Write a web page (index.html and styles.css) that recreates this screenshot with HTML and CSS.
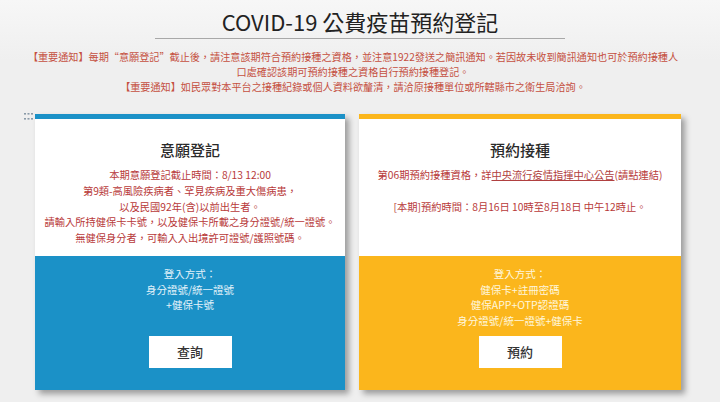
FILE: index.html
```html
<!DOCTYPE html>
<html lang="zh-Hant">
<head>
<meta charset="utf-8">
<title>COVID-19 公費疫苗預約登記</title>
<link rel="stylesheet" href="styles.css">
</head>
<body>
<div class="page">
  <h1 class="title">COVID-19 公費疫苗預約登記</h1>
  <div class="notice">
    <p>【重要通知】每期“意願登記”截止後，請注意該期符合預約接種之資格，並注意1922發送之簡訊通知。若因故未收到簡訊通知也可於預約接種人<br>口處確認該期可預約接種之資格自行預約接種登記。</p>
    <p>【重要通知】如民眾對本平台之接種紀錄或個人資料欲釐清，請洽原接種單位或所轄縣市之衛生局洽詢。</p>
  </div>
  <div class="cards">
    <svg class="grip" width="9" height="7" viewBox="0 0 9 7"><g fill="#8a9aa8"><rect x="0" y="0" width="2" height="1.6"/><rect x="3.5" y="0" width="2" height="1.6"/><rect x="7" y="0" width="2" height="1.6"/><rect x="0" y="5" width="2" height="1.6"/><rect x="3.5" y="5" width="2" height="1.6"/><rect x="7" y="5" width="2" height="1.6"/></g></svg>
    <section class="card card-blue">
      <div class="card-top">
        <h2 class="card-title">意願登記</h2>
        <p class="card-text">本期意願登記截止時間：8/13 12:00<br>第9類-高風險疾病者、罕見疾病及重大傷病患，<br>以及民國92年(含)以前出生者。<br>請輸入所持健保卡卡號，以及健保卡所載之身分證號/統一證號。<br>無健保身分者，可輸入入出境許可證號/護照號碼。</p>
      </div>
      <div class="card-bottom">
        <p class="login">登入方式：<br>身分證號/統一證號<br>+健保卡號</p>
        <a class="btn" href="#">查詢</a>
      </div>
    </section>
    <section class="card card-yellow">
      <div class="card-top">
        <h2 class="card-title">預約接種</h2>
        <p class="card-text">第06期預約接種資格，詳<a class="link" href="#">中央流行疫情指揮中心公告</a>(請點連結)<br><br>[本期]預約時間：8月16日 10時至8月18日 中午12時止。</p>
      </div>
      <div class="card-bottom">
        <p class="login">登入方式：<br>健保卡+註冊密碼<br>健保APP+OTP認證碼<br>身分證號/統一證號+健保卡</p>
        <a class="btn" href="#">預約</a>
      </div>
    </section>
  </div>
</div>
</body>
</html>
```
FILE: styles.css
```css
* { box-sizing: border-box; }
html, body {
  margin: 0;
  padding: 0;
  background: #efefef;
  font-family: "Noto Sans CJK TC", "Noto Sans", sans-serif;
}
.page {
  width: 720px;
  height: 402px;
  overflow: hidden;
  background: linear-gradient(#f7f7f7, #efefef 60px);
}
.title {
  width: 410px;
  margin: 0 auto;
  padding-top: 6px;
  height: 39px;
  border-bottom: 1px solid #a8a8a8;
  text-align: center;
  font-size: 22px;
  line-height: 30px;
  font-weight: 400;
  color: #222;
}
.notice {
  margin: 10px 0 0 0;
  padding-right: 14px;
  text-align: center;
  color: #c5503f;
  font-size: 10.15px;
  line-height: 15px;
}
.notice p { margin: 0; }
.cards {
  position: relative;
  display: flex;
  gap: 14px;
  margin-top: 20px;
  padding-left: 35px;
}
.grip {
  position: absolute;
  left: 24px;
  top: -1px;
}
.card {
  display: flex;
  flex-direction: column;
  box-shadow: 4px 4px 6px rgba(0, 0, 0, 0.35);
}
.card-blue { width: 310px; border-top: 5px solid #1b91c7; }
.card-yellow { width: 322px; border-top: 5px solid #fbb61c; }
.card-top {
  height: 137px;
  background: #fff;
  padding-top: 21px;
  text-align: center;
}
.card-title {
  margin: 0;
  font-size: 15px;
  line-height: 20px;
  font-weight: 500;
  color: #2a2a2a;
}
.card-text {
  margin: 7px 0 0 0;
  font-size: 10.25px;
  line-height: 15.8px;
  color: #b83a3a;
}
.link { color: #b04040; text-decoration: underline; }
.card-bottom {
  height: 134px;
  padding-top: 10px;
  display: flex;
  flex-direction: column;
  align-items: center;
}
.card-blue .card-bottom { background: #1b91c7; color: #e2f1fa; }
.card-yellow .card-bottom { background: #fbb61c; color: #fff6dc; }
.login {
  margin: 0;
  height: 62px;
  text-align: center;
  font-size: 10.5px;
  line-height: 15.7px;
}
.btn {
  display: block;
  margin-top: 8px;
  width: 83px;
  height: 32px;
  background: #fff;
  color: #333;
  text-align: center;
  text-decoration: none;
  font-size: 13px;
  line-height: 32px;
  font-weight: 500;
}
```
